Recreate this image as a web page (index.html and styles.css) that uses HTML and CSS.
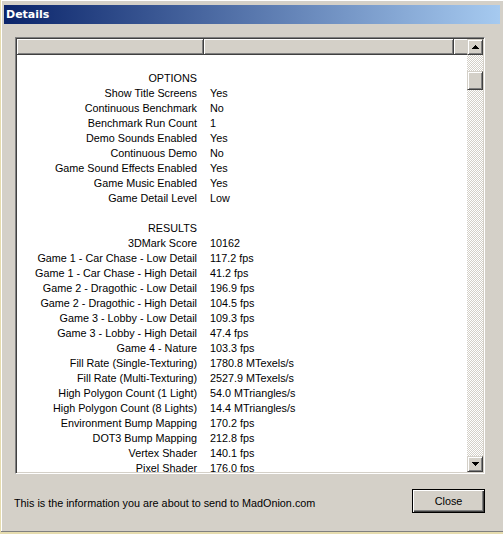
FILE: index.html
```html
<!DOCTYPE html>
<html>
<head>
<meta charset="utf-8">
<link rel="stylesheet" href="styles.css">
</head>
<body>
<div class="window">
  <div class="titlebar"><span class="title">Details</span></div>
  <div class="client">
    <div class="listbox">
      <div class="list-main">
        <div class="header">
          <div class="hcell c1"></div>
          <div class="hcell c2"></div>
          <div class="hcell c3"></div>
        </div>
        <div class="rows">
          <div class="row"><span class="lab"></span><span class="val"></span></div>
          <div class="row"><span class="lab">OPTIONS</span><span class="val"></span></div>
          <div class="row"><span class="lab">Show Title Screens</span><span class="val">Yes</span></div>
          <div class="row"><span class="lab">Continuous Benchmark</span><span class="val">No</span></div>
          <div class="row"><span class="lab">Benchmark Run Count</span><span class="val">1</span></div>
          <div class="row"><span class="lab">Demo Sounds Enabled</span><span class="val">Yes</span></div>
          <div class="row"><span class="lab">Continuous Demo</span><span class="val">No</span></div>
          <div class="row"><span class="lab">Game Sound Effects Enabled</span><span class="val">Yes</span></div>
          <div class="row"><span class="lab">Game Music Enabled</span><span class="val">Yes</span></div>
          <div class="row"><span class="lab">Game Detail Level</span><span class="val">Low</span></div>
          <div class="row"><span class="lab"></span><span class="val"></span></div>
          <div class="row"><span class="lab">RESULTS</span><span class="val"></span></div>
          <div class="row"><span class="lab">3DMark Score</span><span class="val">10162</span></div>
          <div class="row"><span class="lab">Game 1 - Car Chase - Low Detail</span><span class="val">117.2 fps</span></div>
          <div class="row"><span class="lab">Game 1 - Car Chase - High Detail</span><span class="val">41.2 fps</span></div>
          <div class="row"><span class="lab">Game 2 - Dragothic - Low Detail</span><span class="val">196.9 fps</span></div>
          <div class="row"><span class="lab">Game 2 - Dragothic - High Detail</span><span class="val">104.5 fps</span></div>
          <div class="row"><span class="lab">Game 3 - Lobby - Low Detail</span><span class="val">109.3 fps</span></div>
          <div class="row"><span class="lab">Game 3 - Lobby - High Detail</span><span class="val">47.4 fps</span></div>
          <div class="row"><span class="lab">Game 4 - Nature</span><span class="val">103.3 fps</span></div>
          <div class="row"><span class="lab">Fill Rate (Single-Texturing)</span><span class="val">1780.8 MTexels/s</span></div>
          <div class="row"><span class="lab">Fill Rate (Multi-Texturing)</span><span class="val">2527.9 MTexels/s</span></div>
          <div class="row"><span class="lab">High Polygon Count (1 Light)</span><span class="val">54.0 MTriangles/s</span></div>
          <div class="row"><span class="lab">High Polygon Count (8 Lights)</span><span class="val">14.4 MTriangles/s</span></div>
          <div class="row"><span class="lab">Environment Bump Mapping</span><span class="val">170.2 fps</span></div>
          <div class="row"><span class="lab">DOT3 Bump Mapping</span><span class="val">212.8 fps</span></div>
          <div class="row"><span class="lab">Vertex Shader</span><span class="val">140.1 fps</span></div>
          <div class="row"><span class="lab">Pixel Shader</span><span class="val">176.0 fps</span></div>
        </div>
      </div>
      <div class="scrollbar">
        <div class="sbtn">
          <svg width="7" height="4" viewBox="0 0 7 4"><path d="M3 0h1v1h1v1h1v1h1v1H0V3h1V2h1V1h1z" fill="#000"/></svg>
        </div>
        <div class="track"><div class="thumb"></div></div>
        <div class="sbtn">
          <svg width="7" height="4" viewBox="0 0 7 4"><path d="M0 0h7v1H6v1H5v1H4v1H3V3H2V2H1V1H0z" fill="#000"/></svg>
        </div>
      </div>
    </div>
    <div class="footer">
      <span class="info">This is the information you are about to send to MadOnion.com</span>
      <button class="close">Close</button>
    </div>
  </div>
</div>
</body>
</html>
```

FILE: styles.css
```css
html, body {
  margin: 0;
  padding: 0;
  background: #d4d0c8;
}
.window {
  width: 503px;
  height: 534px;
  box-sizing: border-box;
  background: #d4d0c8;
  border-left: 1px solid #e6dcae;
  border-bottom: 2px solid #e6dcae;
  box-shadow: inset 0 -1px #808080, inset 1px 1px #fff;
  padding: 5px 3px 0 3px;
  font-family: "Liberation Sans", Arial, sans-serif;
  font-size: 10.8px;
  color: #000;
  overflow: hidden;
}
.titlebar {
  height: 19px;
  background: linear-gradient(to right, #0a246a, #a6caf0);
  display: flex;
  align-items: center;
  padding-left: 2px;
}
.title {
  color: #fff;
  font-weight: bold;
  font-family: "DejaVu Sans", Tahoma, sans-serif;
  font-size: 11px;
}
.client {
  padding: 13px 0 0 11px;
}
.listbox {
  width: 470px;
  height: 437px;
  box-sizing: border-box;
  border: 1px solid;
  border-color: #808080 #fff #fff #808080;
  box-shadow: inset 1px 1px #404040, inset -1px -1px #d4d0c8;
  padding: 1px;
  display: flex;
  background: #fff;
}
.list-main {
  width: 450px;
  display: flex;
  flex-direction: column;
  overflow: hidden;
}
.header {
  display: flex;
  height: 16px;
  flex: none;
  background: #d4d0c8;
}
.hcell {
  box-sizing: border-box;
  height: 16px;
  background: #d4d0c8;
  border-right: 1px solid #404040;
  border-bottom: 1px solid #404040;
  box-shadow: inset 1px 1px #fff, inset -1px -1px #808080;
}
.c1 { width: 187px; }
.c2 { width: 250px; }
.c3 { width: 13px; border-right: none; box-shadow: inset 1px 1px #fff, inset 0 -1px #808080; }
.rows {
  flex: 1;
  overflow: hidden;
  padding-top: 1px;
}
.row {
  display: flex;
  height: 15px;
  line-height: 15px;
  white-space: nowrap;
}
.lab {
  width: 187px;
  box-sizing: border-box;
  padding-right: 7px;
  text-align: right;
  flex: none;
}
.val {
  padding-left: 6px;
}
.scrollbar {
  width: 16px;
  display: flex;
  flex-direction: column;
  flex: none;
}
.sbtn {
  width: 16px;
  height: 16px;
  box-sizing: border-box;
  flex: none;
  background: #d4d0c8;
  border: 1px solid;
  border-color: #d4d0c8 #404040 #404040 #d4d0c8;
  box-shadow: inset 1px 1px #fff, inset -1px -1px #808080;
  display: flex;
  align-items: center;
  justify-content: center;
}
.sbtn svg { display: block; }
.track {
  flex: 1;
  background-color: #fff;
  background-image: conic-gradient(#d4d0c8 25%, #fff 0 50%, #d4d0c8 0 75%, #fff 0);
  background-size: 2px 2px;
  padding-top: 16px;
}
.thumb {
  width: 16px;
  height: 19px;
  box-sizing: border-box;
  background: #d4d0c8;
  border: 1px solid;
  border-color: #d4d0c8 #404040 #404040 #d4d0c8;
  box-shadow: inset 1px 1px #fff, inset -1px -1px #808080;
}
.footer {
  width: 470px;
  display: flex;
  justify-content: space-between;
  align-items: center;
  margin-top: 15px;
}
.info {
  margin-left: -1px;
  padding-top: 4px;
}
.close {
  width: 73px;
  height: 24px;
  box-sizing: border-box;
  background: #d4d0c8;
  border: 1px solid #000;
  box-shadow: inset 1px 1px #fff, inset -1px -1px #404040, inset -2px -2px #808080;
  font-family: "Liberation Sans", Arial, sans-serif;
  font-size: 10.8px;
  color: #000;
  padding: 0;
  margin: 0;
}
```
